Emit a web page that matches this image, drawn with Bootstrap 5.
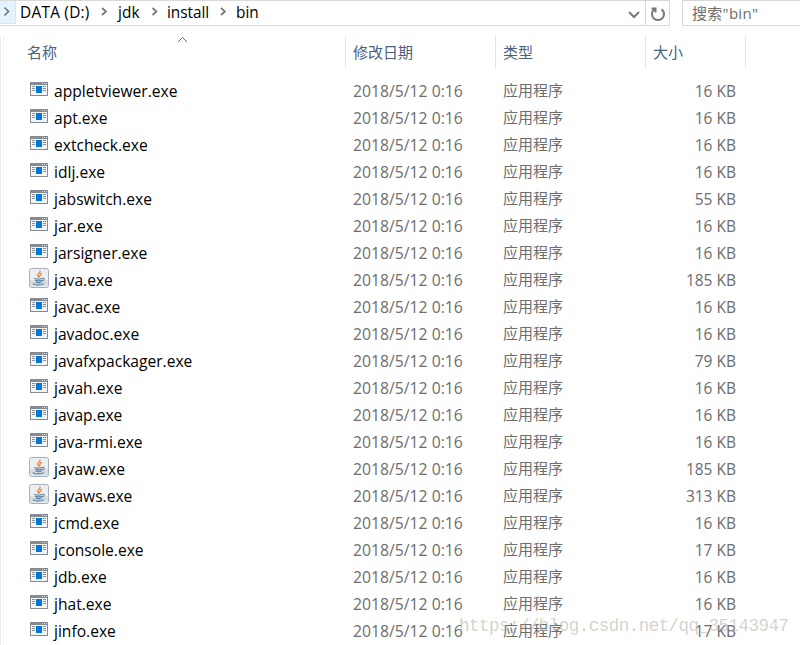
<!DOCTYPE html>
<html lang="zh-CN">
<head>
<meta charset="utf-8">
<meta name="viewport" content="width=device-width, initial-scale=1">
<title>bin</title>
<link href="https://cdn.jsdelivr.net/npm/bootstrap@5.3.0/dist/css/bootstrap.min.css" rel="stylesheet">
<style>
body{width:800px;height:645px;overflow:hidden;background:#fff;color:#000;font:15px/27px "Open Sans","Noto Sans CJK SC",sans-serif}
.topbar{height:27px;line-height:24px}
.address{width:670px;height:26px;border:1px solid #d9d9d9;border-left:0}
.crumb-start{width:16px;height:23px;background:#e5f3ff;border:1px solid #cce8ff;border-left:0;border-top:0}
.crumb{font-size:15.4px}
.drive{margin-left:4px;width:79px;letter-spacing:.25px}
.refresh{width:24px;height:24px;border-left:1px solid #d9d9d9}
.search{height:26px;margin-left:12px;padding-left:9px;border:1px solid #d9d9d9;border-right:0;color:#6d6d6d;letter-spacing:.3px}
.heads{height:50px;padding-top:9px;color:#4c607a}
.edge{width:4px;height:609px;margin-top:9px;border-left:1px solid #ececec;border-right:1px solid #f3f3f3}
.heads>div{height:32px;line-height:33px;border-right:1px solid #e2e2e2}
.c-name{width:342px}.c-date,.c-type{width:150px;padding-left:7px}.c-size{width:100px;padding-left:7px}
.heads .c-name{padding-left:23px}
.sorter{left:173px;top:0}
.file{height:27px;color:#6d6d6d}
.file .c-name{padding-left:25px;color:#000;font-size:15.6px}
.file .c-name span,.file .c-date,.file .c-size{line-height:28px}
.file .c-date{font-size:15.75px}
.file .c-size{padding-right:10px;font-size:15.5px}
.ico{width:20px;height:20px;margin:2px 5px 0 0}
.stamp{left:459px;top:613px;font:17.500px/27px "Liberation Mono",monospace;letter-spacing:-.52px;color:rgba(175,175,163,.55);white-space:nowrap}
</style>
</head>
<body class="position-relative">
<svg class="d-none">
<symbol id="app" viewBox="0 0 20 20"><path fill="#858b90" d="M1 3h18v14H1z"/><path fill="#f4f4f4" d="M2 6h16v10H2z"/><path fill="#d5d9dc" d="M13 4h1v1h-1zM15 4h1v1h-1zM17 4h1v1h-1z"/><path fill="#0078d7" d="M7 7h6v7H7z"/><path stroke="#8b9094" d="M3 7.5h3M3 9.5h3M3 11.5h3M14 7.5h3M14 9.5h3M14 11.5h3"/></symbol>
<symbol id="java" viewBox="0 0 20 20"><rect x=".5" y=".5" width="19" height="19" rx="2" fill="#edf0f2" stroke="#a5b0ba"/><path fill="#d9dee3" d="M1 12h18v6.500H1z"/><g fill="none" stroke-linecap="round"><path stroke="#ee8a45" stroke-width="1.4" d="M11 3c1 2-3 2.400-2.500 3.900.3.8 1.300 1.200.8 2.300M12.500 5.500c-3 1.500-1 2-2 3.300"/><path stroke="#6386a5" stroke-width="1.2" d="M5.500 10.500c2 .6 5.500.6 7.500 0M6.500 12.400c2 .7 4 .7 6 0M7 14.200c2 .7 3.500.7 5 0M13.500 10.500c2.500-.5 2 2-.3 2.500M4.500 15.500c-1 1.800 9 1.800 10 0"/></g></symbol>
</svg>
<header class="topbar d-flex">
 <nav class="address d-flex align-items-start" aria-label="地址">
  <span class="crumb-start d-flex align-items-center"><svg width="12" height="23" fill="none" stroke="#777" stroke-width="1.7"><path d="M4.500 6.500 8.500 10.500 4.500 14.500"/></svg></span>
  <span class="crumb drive">DATA&nbsp;(D:)</span>
  <svg width="19" height="23" fill="none" stroke="#777" stroke-width="1.7"><path d="M3 7 7 10.500 3 14"/></svg>
  <span class="crumb" style="width:31px;letter-spacing:.1px">jdk</span>
  <svg width="18" height="23" fill="none" stroke="#777" stroke-width="1.7"><path d="M3.500 7 7.500 10.500 3.500 14"/></svg>
  <span class="crumb" style="width:50px;letter-spacing:-.05px">install</span>
  <svg width="19" height="23" fill="none" stroke="#777" stroke-width="1.7"><path d="M4 7 8 10.500 4 14"/></svg>
  <span class="crumb">bin</span>
  <svg class="ms-auto" width="18" height="24" fill="none" stroke="#777" stroke-width="2"><path d="M2 11 7 16 12 11"/></svg>
  <span class="refresh"><svg class="d-block" width="23" height="24" fill="none" stroke="#777" stroke-width="2"><path d="M8.500 8.200A6 6 0 1 0 15.500 8.200M5.500 7.500h4v4"/></svg></span>
 </nav>
 <div class="search flex-grow-1">搜索"bin"</div>
</header>
<div class="d-flex">
<div class="edge"></div>
<main>
 <div class="heads d-flex position-relative">
  <svg class="sorter position-absolute" width="12" height="16" fill="none" stroke="#666"><path d="M1 15 5.500 10.500 10 15"/></svg>
  <div class="c-name">名称</div><div class="c-date">修改日期</div><div class="c-type">类型</div><div class="c-size">大小</div>
 </div>
 <div id="files"></div>
</main>
</div>
<div class="stamp position-absolute">https://blog.csdn.net/qq_35143947</div>
<script>
const files=[["appletviewer",16],["apt",16],["extcheck",16],["idlj",16],["jabswitch",55],["jar",16],["jarsigner",16],["java",185],["javac",16],["javadoc",16],["javafxpackager",79],["javah",16],["javap",16],["java-rmi",16],["javaw",185],["javaws",313],["jcmd",16],["jconsole",17],["jdb",16],["jhat",16],["jinfo",17]];
document.getElementById("files").innerHTML=files.map(([n,s])=>`<div class="file d-flex"><div class="c-name d-flex"><svg class="ico"><use href="#${["java","javaw","javaws"].includes(n)?"java":"app"}"/></svg><span>${n}.exe</span></div><div class="c-date">2018/5/12 0:16</div><div class="c-type">应用程序</div><div class="c-size text-end">${s} KB</div></div>`).join("");
</script>
<script src="https://cdn.jsdelivr.net/npm/bootstrap@5.3.0/dist/js/bootstrap.bundle.min.js"></script>
</body>
</html>
